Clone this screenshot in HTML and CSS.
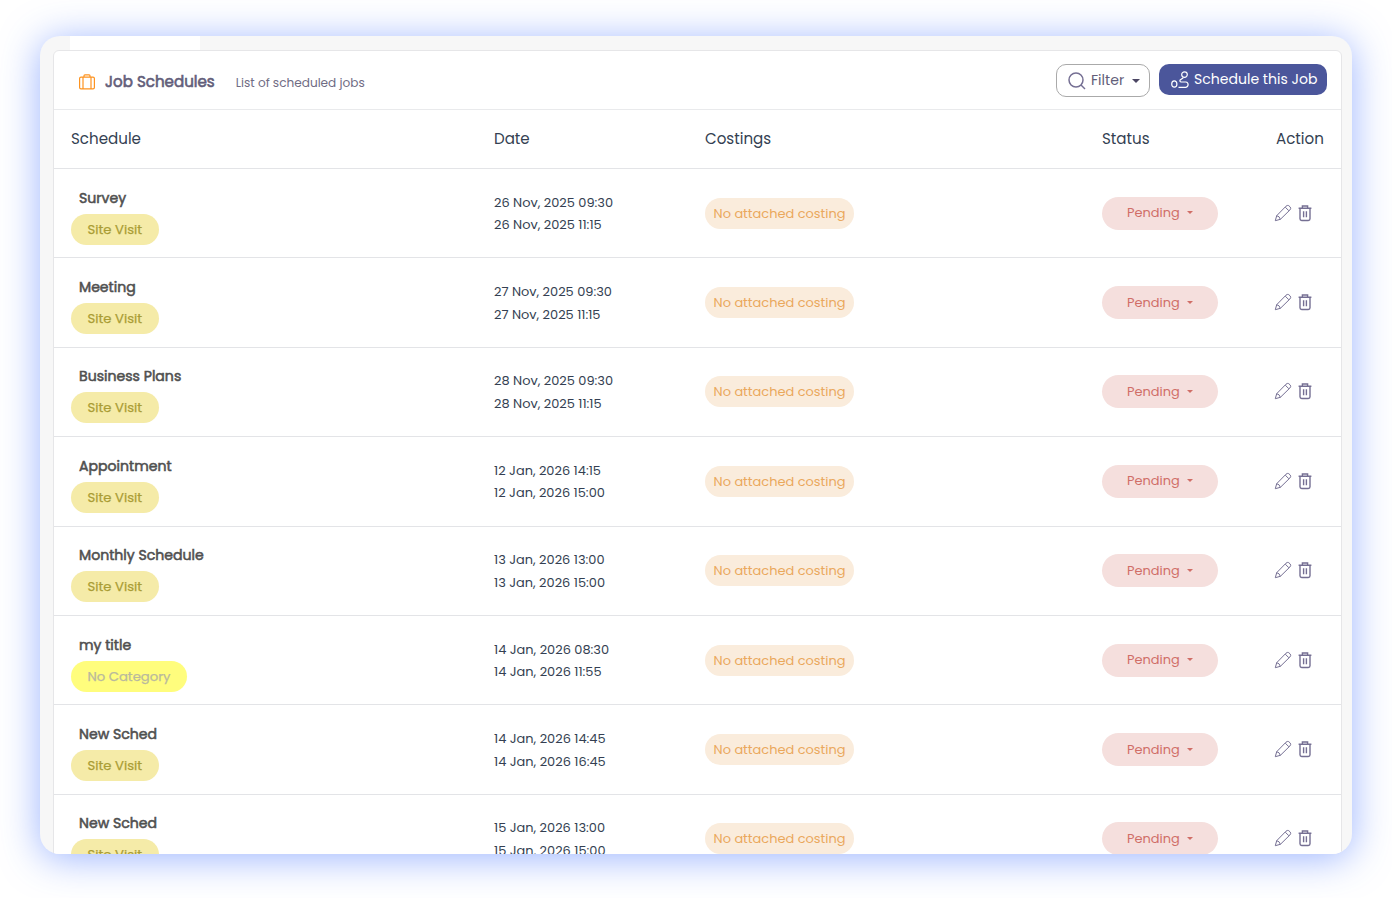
FILE: index.html
```html
<!DOCTYPE html>
<html lang="en">
<head>
  <meta charset="UTF-8">
  <meta name="viewport" content="width=device-width, initial-scale=1.0">
  <title>Job Schedules</title>
  <link rel="stylesheet" href="styles.css">
</head>
<body>
  <svg class="sprite" width="0" height="0">
    <symbol id="pencil" viewBox="0 0 18 18">
      <path d="M1.300 16.700L2.700 11.700 12 2.200q1.300-1.200 2.700-.6l1.600 1.500q1 1.300-.4 2.900l-9.500 9.300zM2.700 11.700q2.700.3 3.700 3.600M11.300 3.200l3.600 3.600"/>
    </symbol>
    <symbol id="trash" viewBox="0 0 14 18">
      <path d="M.6 4.200h12.800M4.400 4V2h5.200V4M2 4.400v10.400q0 1.700 1.700 1.700h6.600q1.700 0 1.700-1.700V4.400M5.600 7.300v6M8.400 7.300v6"/>
    </symbol>
  </svg>

  <div class="frame">
    <div class="tab"></div>
    <div class="card">
      <div class="card-header">
        <svg class="case" viewBox="0 0 16 16"><path d="M2 3.200h12q1.400 0 1.400 1.400v8.800q0 1.400-1.400 1.400H2q-1.400 0-1.400-1.400V4.600Q.6 3.200 2 3.200zM4 3.200v11.600M12 3.200v11.600M5 3V1.800q0-.9.9-.9h4.200q.9 0 .9.900V3"/></svg>
        <h1>Job Schedules</h1>
        <span class="subtitle">List of scheduled jobs</span>
        <div class="tools">
          <button class="filter">
            <svg viewBox="0 0 18 18"><circle cx="8" cy="8" r="7"/><path d="M13 13l4 4"/></svg>
            <span>Filter</span><i class="caret"></i>
          </button>
          <button class="primary">
            <svg viewBox="0 0 18 18"><circle cx="13.500" cy="3.600" r="2.800"/><ellipse cx="3.300" cy="13" rx="2.600" ry="3.200"/><path d="M12.300 6.800L9.200 8.900q-1 1.800 1 2.100h4.600q2.300.3 2.300 2.600t-2.300 2.700H7.500"/></svg>
            <span>Schedule this Job</span>
          </button>
        </div>
      </div>

      <div class="row head">
        <span>Schedule</span><span>Date</span><span>Costings</span><span>Status</span><span>Action</span>
      </div>
      <div class="row">
        <div class="job"><b>Survey</b><span class="tag">Site Visit</span></div>
        <div class="date"><span>26 Nov, 2025 09:30</span><span>26 Nov, 2025 11:15</span></div>
        <div><span class="costing">No attached costing</span></div>
        <div><span class="status">Pending<i class="caret"></i></span></div>
        <div class="actions"><svg class="pencil"><use href="#pencil"/></svg><svg class="trash"><use href="#trash"/></svg></div>
      </div>
      <div class="row">
        <div class="job"><b>Meeting</b><span class="tag">Site Visit</span></div>
        <div class="date"><span>27 Nov, 2025 09:30</span><span>27 Nov, 2025 11:15</span></div>
        <div><span class="costing">No attached costing</span></div>
        <div><span class="status">Pending<i class="caret"></i></span></div>
        <div class="actions"><svg class="pencil"><use href="#pencil"/></svg><svg class="trash"><use href="#trash"/></svg></div>
      </div>
      <div class="row">
        <div class="job"><b>Business Plans</b><span class="tag">Site Visit</span></div>
        <div class="date"><span>28 Nov, 2025 09:30</span><span>28 Nov, 2025 11:15</span></div>
        <div><span class="costing">No attached costing</span></div>
        <div><span class="status">Pending<i class="caret"></i></span></div>
        <div class="actions"><svg class="pencil"><use href="#pencil"/></svg><svg class="trash"><use href="#trash"/></svg></div>
      </div>
      <div class="row">
        <div class="job"><b>Appointment</b><span class="tag">Site Visit</span></div>
        <div class="date"><span>12 Jan, 2026 14:15</span><span>12 Jan, 2026 15:00</span></div>
        <div><span class="costing">No attached costing</span></div>
        <div><span class="status">Pending<i class="caret"></i></span></div>
        <div class="actions"><svg class="pencil"><use href="#pencil"/></svg><svg class="trash"><use href="#trash"/></svg></div>
      </div>
      <div class="row">
        <div class="job"><b>Monthly Schedule</b><span class="tag">Site Visit</span></div>
        <div class="date"><span>13 Jan, 2026 13:00</span><span>13 Jan, 2026 15:00</span></div>
        <div><span class="costing">No attached costing</span></div>
        <div><span class="status">Pending<i class="caret"></i></span></div>
        <div class="actions"><svg class="pencil"><use href="#pencil"/></svg><svg class="trash"><use href="#trash"/></svg></div>
      </div>
      <div class="row">
        <div class="job"><b>my title</b><span class="tag none">No Category</span></div>
        <div class="date"><span>14 Jan, 2026 08:30</span><span>14 Jan, 2026 11:55</span></div>
        <div><span class="costing">No attached costing</span></div>
        <div><span class="status">Pending<i class="caret"></i></span></div>
        <div class="actions"><svg class="pencil"><use href="#pencil"/></svg><svg class="trash"><use href="#trash"/></svg></div>
      </div>
      <div class="row">
        <div class="job"><b>New Sched</b><span class="tag">Site Visit</span></div>
        <div class="date"><span>14 Jan, 2026 14:45</span><span>14 Jan, 2026 16:45</span></div>
        <div><span class="costing">No attached costing</span></div>
        <div><span class="status">Pending<i class="caret"></i></span></div>
        <div class="actions"><svg class="pencil"><use href="#pencil"/></svg><svg class="trash"><use href="#trash"/></svg></div>
      </div>
      <div class="row">
        <div class="job"><b>New Sched</b><span class="tag">Site Visit</span></div>
        <div class="date"><span>15 Jan, 2026 13:00</span><span>15 Jan, 2026 15:00</span></div>
        <div><span class="costing">No attached costing</span></div>
        <div><span class="status">Pending<i class="caret"></i></span></div>
        <div class="actions"><svg class="pencil"><use href="#pencil"/></svg><svg class="trash"><use href="#trash"/></svg></div>
      </div>
    </div>
  </div>
</body>
</html>
```
FILE: styles.css
```css
* {
  box-sizing: border-box;
}
body {
  margin: 0;
  height: 898px;
  padding: 36px 40px 44px;
  overflow: hidden;
  background: #fff;
  font-family: Poppins, Inter, sans-serif;
  font-size: 12.950px;
  color: #343f52;
}
svg {
  fill: none;
  stroke: #756f93;
  stroke-width: 1.2;
  flex: none;
}
.sprite {
  display: none;
}
.frame {
  height: 818px;
  overflow: hidden;
  padding: 0 10px 0 13px;
  border-radius: 20px;
  background: #f7f7f7;
  box-shadow: 0 4px 38px rgba(55, 105, 255, 0.5);
}
.tab {
  width: 130px;
  height: 14px;
  margin-left: 17px;
  background: #fff;
}
.card {
  border: 1px solid #e6e6e8;
  border-radius: 6px;
  background: #fff;
}
.card-header {
  display: flex;
  align-items: center;
  height: 59px;
  padding: 4px 14px 0 25px;
  border-bottom: 1px solid #e9eaec;
}
.case {
  width: 16px;
  height: 16px;
  margin-top: -1px;
  stroke: #fd9320;
}
h1 {
  margin: -1px 21px 0 10px;
  font-size: 15.100px;
  font-weight: 400;
  -webkit-text-stroke: 0.6px;
  color: #625d79;
}
.subtitle {
  padding-top: 1px;
  font-size: 12.100px;
  color: #706c84;
}
.tools {
  display: flex;
  gap: 9px;
  margin: -4px 0 0 auto;
}
button {
  display: flex;
  align-items: center;
  font: inherit;
  border-radius: 10px;
}
button svg {
  width: 18px;
  height: 18px;
}
.filter {
  width: 94px;
  height: 33px;
  padding: 1px 9px 0 11px;
  border: 1px solid #aaa;
  background: #fff;
  color: #625d79;
  font-size: 14.100px;
}
.filter svg {
  margin-right: 5px;
  stroke-width: 1.5;
}
.caret {
  border: 4px solid transparent;
  border-top-color: currentColor;
  border-bottom: 0;
}
.filter .caret {
  margin-left: auto;
  color: #4b4663;
}
.primary {
  width: 168px;
  height: 31px;
  padding: 0 0 0 12px;
  border: 0;
  background: #4b569b;
  color: #fff;
  font-size: 14.050px;
  white-space: nowrap;
}
.primary svg {
  margin: 1px 5px 0 0;
  stroke: #fff;
}
.row {
  display: grid;
  grid-template-columns: 423px 211px 397px 173px 1fr;
  align-items: center;
  height: 89.400px;
  padding-left: 17px;
  border-bottom: 1px solid #e3e4e7;
}
.head {
  height: 59px;
  padding-bottom: 1px;
  font-size: 15.100px;
}
.head span:last-child {
  padding-left: 1px;
}
.job {
  display: flex;
  flex-direction: column;
  align-items: flex-start;
  padding-top: 5px;
}
.job b {
  margin-left: 8px;
  line-height: 22px;
  font-size: 14.100px;
  font-weight: 400;
  -webkit-text-stroke: 0.55px;
  color: #505050;
}
.tag {
  margin-top: 5px;
  padding: 0 16.500px;
  height: 31px;
  line-height: 31px;
  border-radius: 16px;
  background: #f5eba8;
  color: #aa9d35;
  font-size: 13.200px;
  -webkit-text-stroke: 0.25px;
}
.tag.none {
  background: #fffd7d;
  color: #b9b99e;
}
.date {
  padding-top: 2px;
}
.date span {
  display: block;
  line-height: 22.500px;
}
.costing {
  display: block;
  width: 149px;
  height: 31px;
  line-height: 32px;
  border-radius: 16px;
  background: #faecdc;
  color: #eaa85c;
  text-align: center;
  white-space: nowrap;
}
.status {
  display: flex;
  align-items: center;
  width: 116px;
  height: 33px;
  padding-left: 25px;
  border-radius: 17px;
  background: #f5dfdd;
  color: #d06e67;
}
.status .caret {
  border-width: 3.500px;
  border-bottom: 0;
  margin: -1px 0 0 7px;
}
.actions {
  display: flex;
  align-items: center;
  gap: 6px;
  margin: -1px 0 0 -1px;
}
.pencil {
  width: 18px;
  height: 18px;
  stroke-width: 1;
}
.trash {
  width: 14px;
  height: 18px;
  stroke-width: 1.400;
}
```
